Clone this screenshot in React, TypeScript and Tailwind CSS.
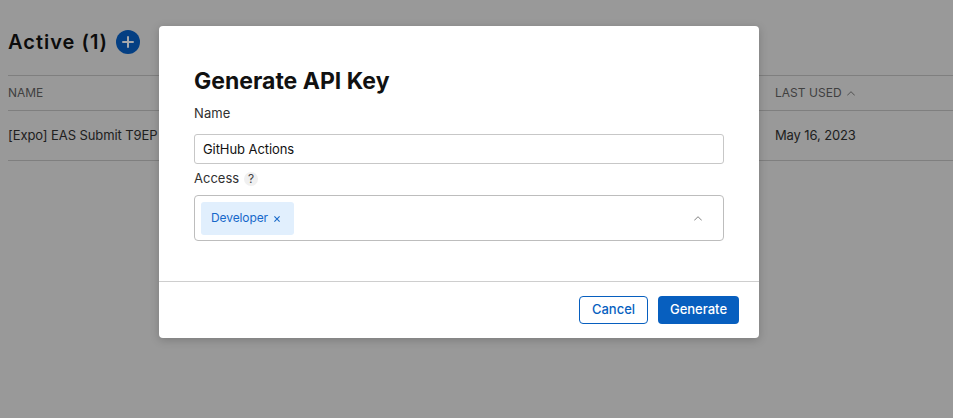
import React from 'react';

function Chevron({ className }: { className: string }) {
  return (
    <svg viewBox="0 0 8 5" fill="none" stroke="currentColor" strokeWidth="0.8" className={className}>
      <path d="M0.2 4.5 4 0.7 7.8 4.5" />
    </svg>
  );
}

function KeysTable() {
  return (
    <main className="h-[418px] w-[953px] pl-2 pt-[30px]">
      <div className="flex h-6 items-center">
        <h1 className="w-[108px] text-[20px] leading-6 font-semibold tracking-[1px] whitespace-nowrap text-[#0c0c0c]">Active (1)</h1>
        <button aria-label="Add key" className="flex size-6 items-center justify-center rounded-full bg-[#043f83]">
          <svg viewBox="0 0 12 12" className="size-3" stroke="#a5a8ac" strokeWidth="2" strokeLinecap="round">
            <path d="M6 1v10M1 6h10" />
          </svg>
        </button>
      </div>
      <div className="mt-[21px] flex h-9 items-center border-y border-[#7f7f7f] text-[12px] text-[#404040]">
        <span className="w-[767px] tracking-[-0.05px]">NAME</span>
        <span className="flex items-center gap-[5px] tracking-[0.02px] whitespace-nowrap">
          LAST USED
          <Chevron className="h-[5px] w-2" />
        </span>
      </div>
      <div className="flex h-[50px] items-center border-b border-[#7f7f7f] text-[13px] text-[#202020]">
        <span className="w-[767px] tracking-[-0.09px]">[Expo] EAS Submit T9EP</span>
        <span className="tracking-[-0.12px]">May 16, 2023</span>
      </div>
    </main>
  );
}

function GenerateDialog() {
  return (
    <section role="dialog" className="absolute top-[26px] left-[159px] flex h-[312px] w-[600px] flex-col rounded-[4px] bg-white shadow-[0_2px_10px_rgba(0,0,0,0.2)]">
      <div className="h-[255px] px-[35px] pt-[41px]">
        <h2 className="text-[23px] leading-7 font-bold text-[#111]">Generate API Key</h2>
        <p className="mt-[10px] text-[13px] leading-4 tracking-[0.1px] text-[#303030]">Name</p>
        <div className="mt-[13px] flex h-[30px] items-center rounded-[3px] border border-[#c7c7c7] px-2 pt-px text-[13px] tracking-[-0.08px] text-[#111]">
          GitHub Actions
        </div>
        <div className="mt-[7px] flex h-4 items-center text-[13px] text-[#303030]">
          <span className="w-[50px]">Access</span>
          <span className="flex size-[14px] items-center justify-center rounded-full bg-[#f0f0f0] text-[12px] tracking-normal text-[#444]">?</span>
        </div>
        <div className="mt-2 flex h-[46px] items-center justify-between rounded-[4px] border border-[#bdbdbd] pr-[21px] pl-[6px]">
          <span className="flex h-[33px] w-[93px] items-center rounded-[3px] bg-[#e1effd] pl-[10px] text-[12px] tracking-[-0.1px] text-[#1668ca]">
            <span className="w-[63px]">Developer</span>
            <svg viewBox="0 0 6 6" className="mt-[2px] size-[6px]" stroke="currentColor" strokeWidth="1.1">
              <path d="m.4.4 5.2 5.2M5.6.4.4 5.6" />
            </svg>
          </span>
          <Chevron className="h-[5px] w-2 text-[#606060]" />
        </div>
      </div>
      <footer className="flex h-[57px] items-center justify-end gap-[10px] border-t border-[#cecece] pr-5 text-[13px] font-medium">
        <button className="h-7 w-[69px] rounded-[4px] border border-[#075fbf] text-[#075fbf]">Cancel</button>
        <button className="h-7 w-[81px] rounded-[4px] bg-[#075fbf] text-white">Generate</button>
      </footer>
    </section>
  );
}

export default function App() {
  return (
    <div className="relative h-[418px] w-[953px] overflow-hidden bg-[#999] font-['Inter',sans-serif]">
      <KeysTable />
      <GenerateDialog />
    </div>
  );
}
